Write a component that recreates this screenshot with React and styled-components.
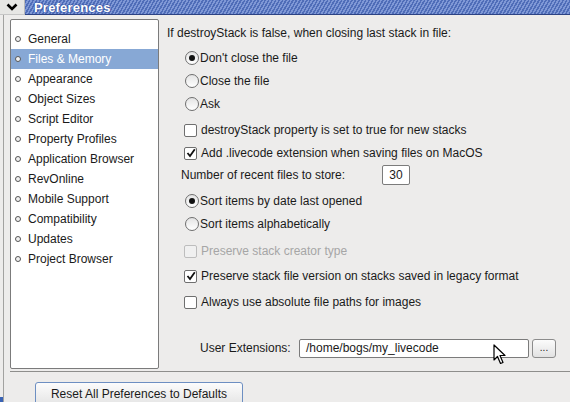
import React from "react";
import styled, { createGlobalStyle } from "styled-components";

const GlobalStyle = createGlobalStyle`
  html, body {
    margin: 0;
    padding: 0;
    background: #edeceb;
    font-family: "Liberation Sans", Arial, sans-serif;
    font-size: 12px;
    color: #111;
  }
`;

const categories = [
    "General",
    "Files & Memory",
    "Appearance",
    "Object Sizes",
    "Script Editor",
    "Property Profiles",
    "Application Browser",
    "RevOnline",
    "Mobile Support",
    "Compatibility",
    "Updates",
    "Project Browser",
];

const App = () => {
    return (
        <>
            <GlobalStyle />
            <Page>
                <TitleBar>
                    <MenuBox>
                        <svg width="12" height="8" viewBox="0 0 12 8">
                            <polyline points="1.5,1.5 6,6 10.5,1.5" fill="none" stroke="#000" strokeWidth="2.6" />
                        </svg>
                    </MenuBox>
                    <TitleStripe>
                        <TitleText>Preferences</TitleText>
                    </TitleStripe>
                </TitleBar>
                <Window>
                    <Body>
                        {/* category list */}
                        <ListBox>
                            {categories.map((c, i) => (
                                <ListItem key={c} selected={i === 1}>
                                    <Bullet />
                                    {c}
                                </ListItem>
                            ))}
                        </ListBox>
                        {/* Files & Memory pane */}
                        <Pane>
                            <Row gap={0}>If destroyStack is false, when closing last stack in file:</Row>
                            <Row gap={3} indent={18}>
                                <Radio checked />Don't close the file
                            </Row>
                            <Row gap={1} indent={18}>
                                <Radio />Close the file
                            </Row>
                            <Row gap={1} indent={18}>
                                <Radio />Ask
                            </Row>
                            <Row gap={4} indent={17}>
                                <Check />destroyStack property is set to true for new stacks
                            </Row>
                            <Row gap={1} indent={17}>
                                <Check checked />Add .livecode extension when saving files on MacOS
                            </Row>
                            <Row gap={0} indent={14}>
                                <NumLabel>Number of recent files to store:</NumLabel>
                                <NumField>30</NumField>
                            </Row>
                            <Row gap={4} indent={18}>
                                <Radio checked />Sort items by date last opened
                            </Row>
                            <Row gap={1} indent={18}>
                                <Radio />Sort items alphabetically
                            </Row>
                            <Row gap={5} indent={17} disabled>
                                <Check disabled />Preserve stack creator type
                            </Row>
                            <Row gap={3} indent={17}>
                                <Check checked />Preserve stack file version on stacks saved in legacy format
                            </Row>
                            <Row gap={4} indent={17}>
                                <Check />Always use absolute file paths for images
                            </Row>
                            <Row gap={24} indent={33}>
                                <ExtLabel>User Extensions:</ExtLabel>
                                <PathField>
                                    /home/bogs/my_livecode
                                    <Pointer width="13" height="21" viewBox="0 0 13 21">
                                        <path d="M1 1 L1 16 L4.5 12.5 L7.5 19.5 L10 18.5 L7 11.5 L12 11.5 Z" fill="#fff" stroke="#000" strokeWidth="1.2" strokeLinejoin="round" />
                                    </Pointer>
                                </PathField>
                                <SmallButton>...</SmallButton>
                            </Row>
                        </Pane>
                    </Body>
                    <Divider />
                    <Footer>
                        <ResetButton>Reset All Preferences to Defaults</ResetButton>
                    </Footer>
                </Window>
            </Page>
        </>
    );
};

const Radio = ({ checked }) => (
    <RadioCircle>{checked && <RadioDot />}</RadioCircle>
);

const Check = ({ checked, disabled }) => (
    <CheckBox disabled={disabled}>
        {checked && (
            <svg width="10" height="10" viewBox="0 0 10 10">
                <polyline points="1.5,5 4,8 8.8,1.2" fill="none" stroke="#111" strokeWidth="1.8" />
            </svg>
        )}
    </CheckBox>
);

const Page = styled.div`
    width: 570px;
    height: 402px;
    overflow: hidden;
    position: relative;
    display: flex;
    flex-direction: column;

    &::after {
        content: "";
        position: absolute;
        left: 0;
        bottom: 0;
        width: 3px;
        height: 5px;
        background: #3a63b4;
    }
`;
const TitleBar = styled.div`
    display: flex;
    height: 15px;
    flex-shrink: 0;
`;
const MenuBox = styled.div`
    width: 24px;
    height: 14px;
    background: #e6e6e4;
    border-right: 1px solid #b8b8b8;
    border-bottom: 1px solid #c6c6c6;
    display: flex;
    align-items: center;
    justify-content: center;
`;
const TitleStripe = styled.div`
    flex: 1;
    height: 14px;
    border-bottom: 1px solid #2c4283;
    background: repeating-linear-gradient(
        -60deg,
        #4f6db8 0px,
        #4f6db8 1.5px,
        #7f98d6 1.5px,
        #7f98d6 3px
    );
    display: flex;
    align-items: center;
    padding-left: 9px;
`;
const TitleText = styled.span`
    color: #fff;
    font-weight: bold;
    font-size: 13px;
    letter-spacing: 0.2px;
    text-shadow: 0 0 2px #2d4a9a, 0 0 1px #2d4a9a;
`;
const Window = styled.div`
    flex: 1;
    margin-left: 3px;
    border-left: 1px solid #a2a2a0;
    display: flex;
    flex-direction: column;
`;
const Body = styled.div`
    display: flex;
    padding-top: 4px;
    height: 350px;
`;
const ListBox = styled.div`
    margin-left: 6px;
    width: 147px;
    height: 339px;
    padding-top: 9px;
    background: #fff;
    border: 1px solid #7b7b7b;
    border-radius: 2px;
`;
const ListItem = styled.div`
    height: 20px;
    display: flex;
    align-items: center;
    padding-left: 4px;
    background: ${(p) => (p.selected ? "#87a8d5" : "transparent")};
    color: ${(p) => (p.selected ? "#fff" : "#1a1a1a")};
`;
const Bullet = styled.span`
    width: 4px;
    height: 4px;
    border: 1px solid #555;
    border-radius: 50%;
    background: #f2f2f2;
    margin-right: 7px;
`;
const Pane = styled.div`
    margin-left: 8px;
    padding-top: 3px;
    display: flex;
    flex-direction: column;
`;
const Row = styled.div`
    height: 22px;
    margin-top: ${(p) => p.gap}px;
    padding-left: ${(p) => p.indent || 0}px;
    display: flex;
    align-items: center;
    white-space: nowrap;
    color: ${(p) => (p.disabled ? "#a6a6a6" : "#1a1a1a")};
`;
const RadioCircle = styled.span`
    width: 12px;
    height: 12px;
    border: 1px solid #6f6f6f;
    border-radius: 50%;
    background: linear-gradient(#e4e4e4, #ffffff);
    margin-right: 1px;
    display: flex;
    align-items: center;
    justify-content: center;
`;
const RadioDot = styled.span`
    width: 6px;
    height: 6px;
    border-radius: 50%;
    background: #111;
`;
const CheckBox = styled.span`
    width: 11px;
    height: 11px;
    border: 1px solid ${(p) => (p.disabled ? "#bdbdbd" : "#6f6f6f")};
    border-radius: 2px;
    background: ${(p) => (p.disabled ? "#f0f0f0" : "#fff")};
    margin-right: 4px;
    display: flex;
    align-items: center;
    justify-content: center;
`;
const NumLabel = styled.span`
    width: 201px;
`;
const NumField = styled.span`
    width: 26px;
    height: 18px;
    border: 1px solid #7b7b7b;
    border-radius: 2px;
    background: #fff;
    display: flex;
    align-items: center;
    justify-content: center;
`;
const ExtLabel = styled.span`
    width: 99px;
`;
const PathField = styled.span`
    position: relative;
    width: 222px;
    height: 17px;
    padding-left: 6px;
    border: 1px solid #7b7b7b;
    border-radius: 2px;
    background: #fff;
    display: flex;
    align-items: center;
`;
const Pointer = styled.svg`
    position: absolute;
    left: 193px;
    top: 4px;
`;
const SmallButton = styled.span`
    margin-left: 3px;
    width: 24px;
    height: 19px;
    border: 1px solid #8c8c8c;
    border-radius: 3px;
    background: linear-gradient(#fbfbfb, #e2e2e2);
    display: flex;
    align-items: center;
    justify-content: center;
    font-size: 10px;
    padding-bottom: 2px;
    box-sizing: border-box;
`;
const Divider = styled.div`
    margin-top: 2px;
    margin-left: 6px;
    height: 1px;
    background: #8e8e8c;
`;
const Footer = styled.div`
    padding-top: 10px;
    padding-left: 31px;
`;
const ResetButton = styled.div`
    width: 208px;
    height: 24px;
    border: 1px solid #6d8fc2;
    border-radius: 3px;
    background: linear-gradient(#fcfcfc, #e4e4e4);
    display: flex;
    justify-content: center;
    padding-top: 4px;
    box-sizing: border-box;
    color: #1a1a1a;
`;

export default App;
